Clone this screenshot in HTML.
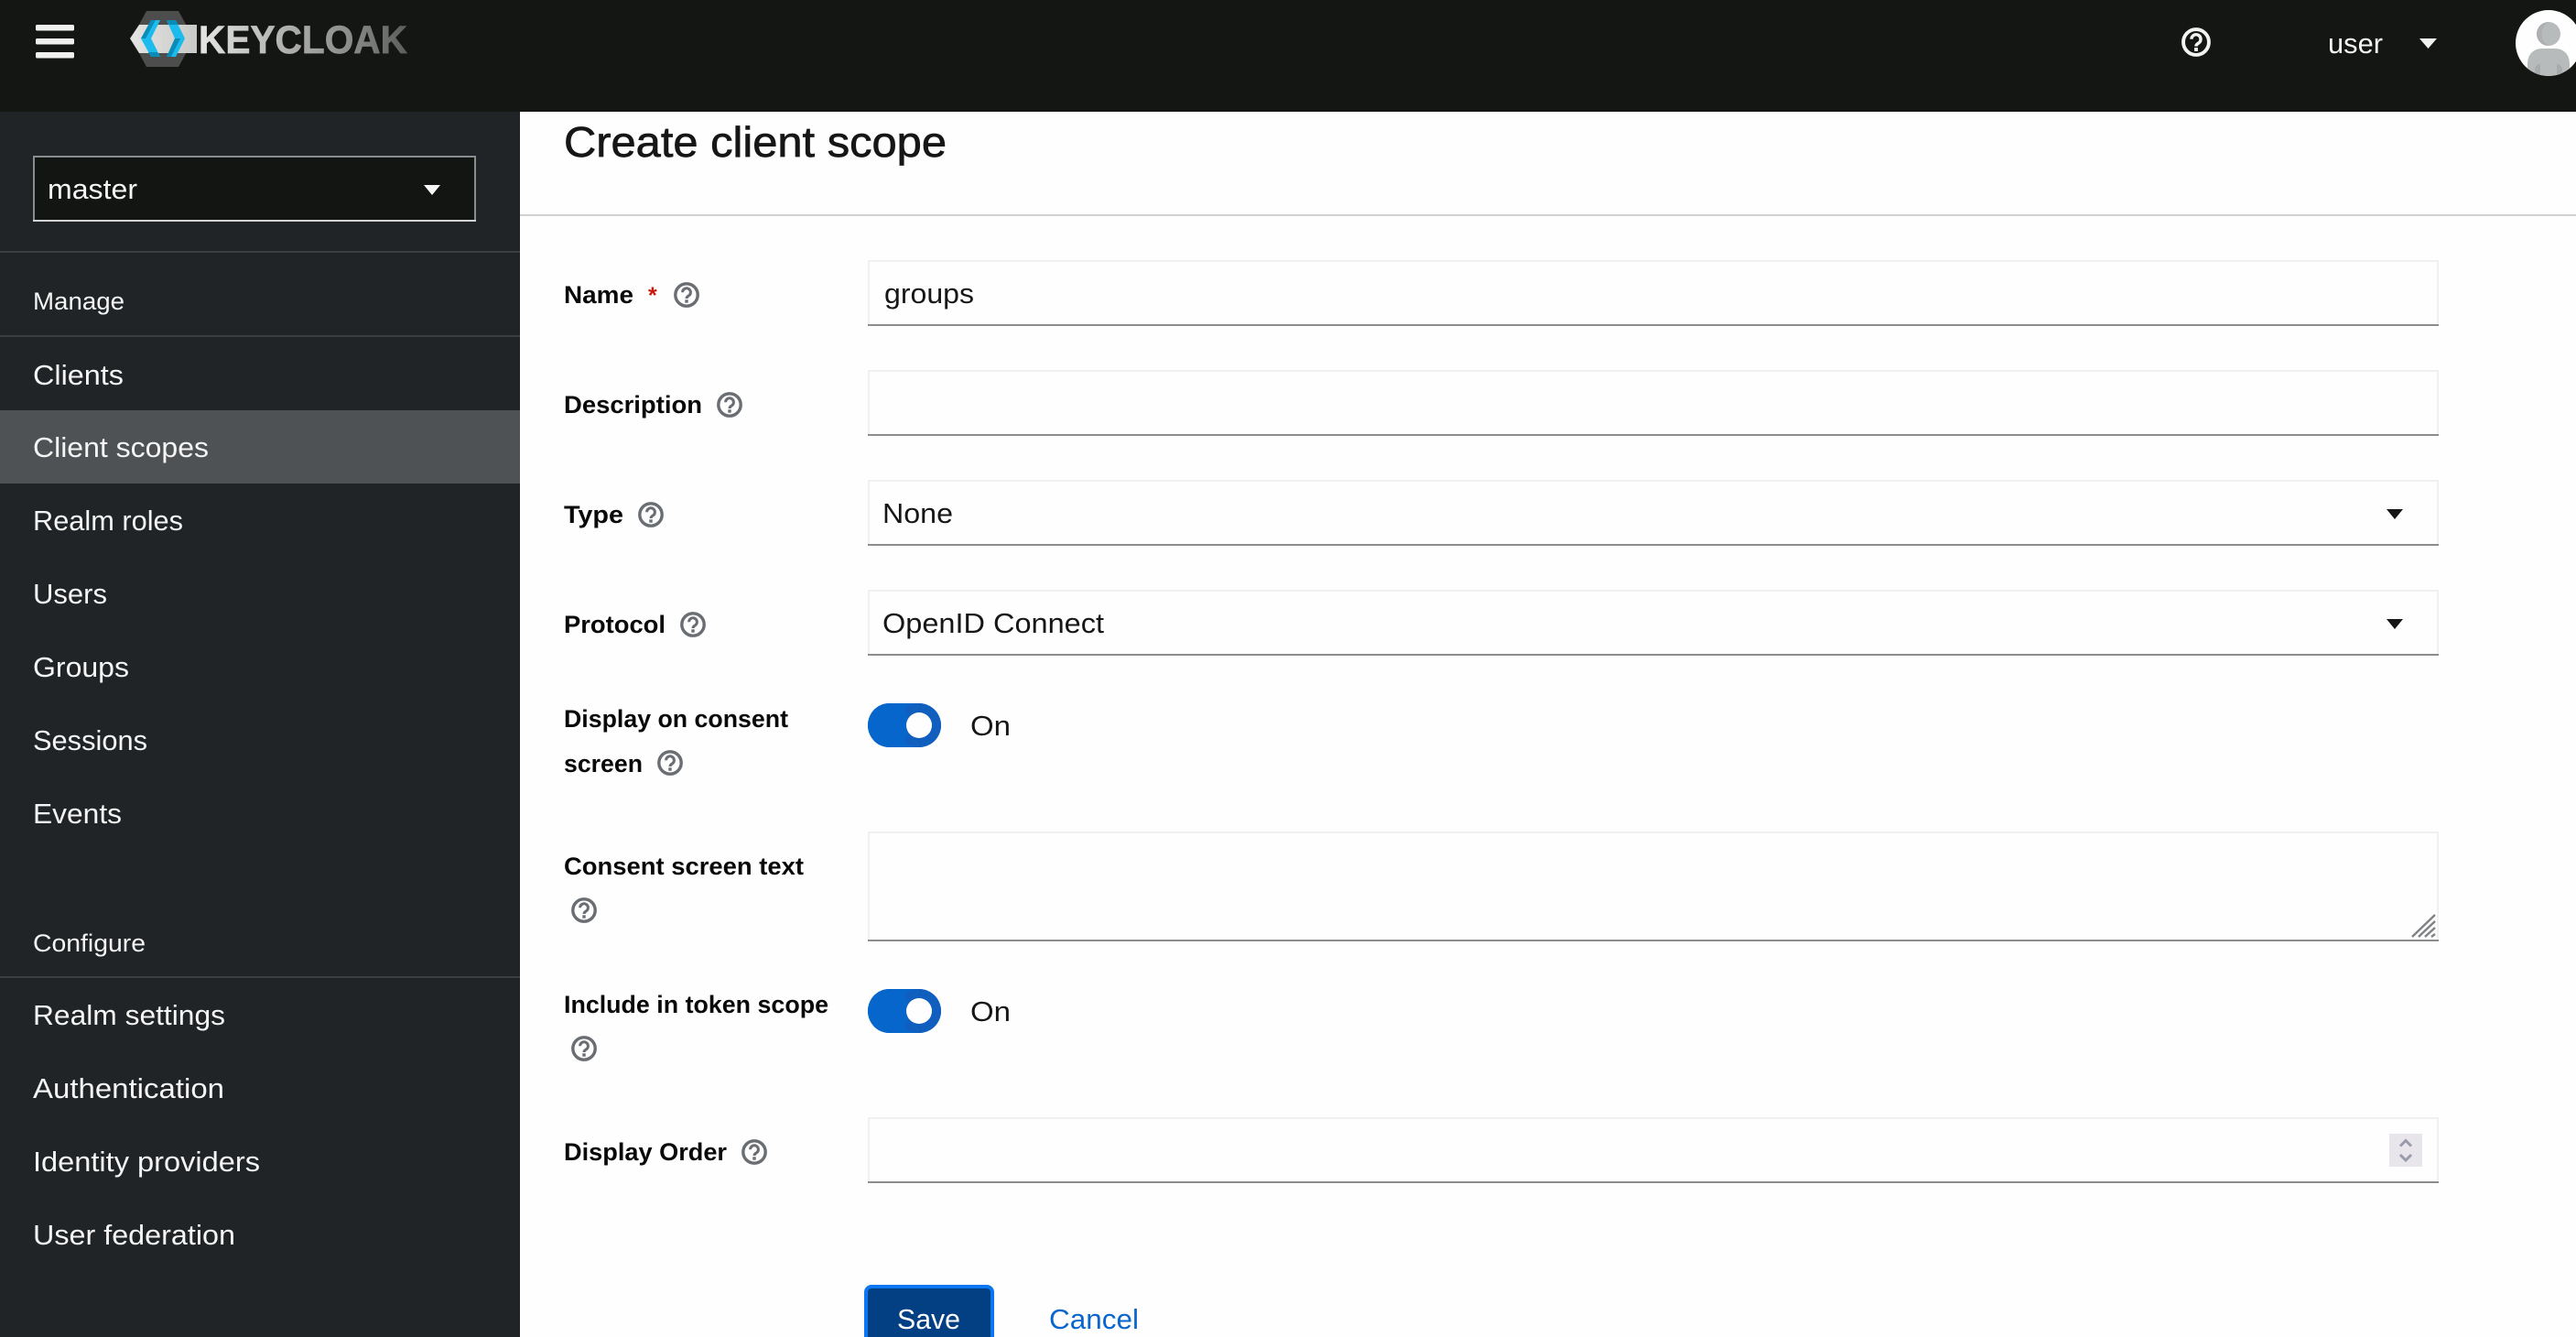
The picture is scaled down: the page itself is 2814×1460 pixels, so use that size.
<!DOCTYPE html>
<html lang="en">
<head>
<meta charset="utf-8">
<title>Create client scope - Keycloak</title>
<style>
html,body{margin:0;padding:0;background:#fdfefd;width:2814px;height:1460px;overflow:hidden}
svg{display:block}
text{font-family:"Liberation Sans",sans-serif;white-space:pre}
.nav{font-size:30.5px;fill:#f4f5f4}
.sec{font-size:26.5px;fill:#f4f5f4}
.lbl{font-size:26.5px;font-weight:700;fill:#080908}
.val{font-size:30.5px;fill:#151615}
.fb{fill:#f0f0f0}
.fl{fill:#8a8c8e}
</style>
</head>
<body>
<svg xmlns="http://www.w3.org/2000/svg" width="2814" height="1460" viewBox="0 0 2814 1460">
<defs>
<linearGradient id="kc" gradientUnits="userSpaceOnUse" x1="217" y1="0" x2="445" y2="0">
<stop offset="0" stop-color="#e6e6e4"/><stop offset="0.35" stop-color="#b8b8b6"/><stop offset="0.72" stop-color="#8c8d8b"/><stop offset="1" stop-color="#5c5d5b"/>
</linearGradient>
<linearGradient id="band" gradientUnits="userSpaceOnUse" x1="142" y1="0" x2="215" y2="0">
<stop offset="0" stop-color="#e4e4e2"/><stop offset="1" stop-color="#c9cac8"/>
</linearGradient>
<symbol id="help" viewBox="0 0 28 28">
<circle cx="14" cy="14" r="12.2" fill="none" stroke="currentColor" stroke-width="3.4"/>
<path d="M9.6 11.2a4.4 4.4 0 1 1 6.9 3.6c-1.5 1-2.5 1.6-2.5 3.2" fill="none" stroke="currentColor" stroke-width="3"/>
<rect x="12.3" y="19.3" width="3.4" height="3.4" fill="currentColor"/>
</symbol>
<clipPath id="av"><circle cx="2784" cy="47" r="36"/></clipPath>
</defs>

<!-- page -->
<rect width="2814" height="1460" fill="#fdfefd"/>

<!-- header -->
<rect width="2814" height="122" fill="#141613"/>
<g fill="#f0f1ee">
<rect x="39" y="27" width="42" height="6.5" rx="1.6"/>
<rect x="39" y="42" width="42" height="6.5" rx="1.6"/>
<rect x="39" y="57" width="42" height="6.5" rx="1.6"/>
</g>

<!-- logo -->
<polygon points="152,27 160,12 195,12 206,32 206,53 195,73 160,73 152,58" fill="#4c4d4c"/>
<polygon points="142,42 152,27 215,27 215,58 152,58" fill="url(#band)"/>
<polygon points="165,22 175,22 165,42 175,62 165,62 154,42" fill="#1cbbed"/>
<polygon points="165,22 170,22 159,42 154,42" fill="#0a8cb8"/>
<polygon points="165,62 175,62 172,57 162,57" fill="#0a8cb8"/>
<polygon points="182,22 192,22 202,42 192,62 182,62 191,42" fill="#1cbbed"/>
<polygon points="182,62 187,62 197,42 191,42" fill="#0a8cb8"/>
<polygon points="182,22 192,22 195,27 185,27" fill="#0a8cb8"/>
<text x="217" y="58" fill="url(#kc)" stroke="url(#kc)" stroke-width="0.7" textLength="228" lengthAdjust="spacingAndGlyphs" style="font-size:43px;font-weight:700">KEYCLOAK</text>

<!-- header right -->
<use href="#help" x="2383" y="30" width="32" height="32" color="#f2f3f0"/>
<text class="nav" x="2543" y="58" textLength="60" lengthAdjust="spacingAndGlyphs">user</text>
<polygon points="2643,42 2662,42 2652.5,53" fill="#f2f3f0"/>
<circle cx="2784" cy="47" r="36" fill="#fdfefd"/>
<g clip-path="url(#av)">
<circle cx="2784" cy="37" r="13" fill="#b8bbbb"/>
<path d="M2784 24a13 13 0 0 0 0 26a15 15 0 0 1 0-26z" fill="#afaeb2"/>
<path d="M2761 84v-14c0-11 7-17 16-17h14c9 0 16 6 16 17v14z" fill="#b8bbbb"/>
<path d="M2769 84v-8c0-4 3-6 6-6v14zM2799 84v-8c0-4-3-6-6-6v14z" fill="#a9abab"/>
</g>

<!-- sidebar -->
<rect y="122" width="568" height="1338" fill="#212427"/>
<rect x="37" y="171" width="482" height="70" fill="#131513" stroke="#8a8d90" stroke-width="2"/>
<rect x="36" y="240" width="484" height="2" fill="#d2d2d2"/>
<text class="nav" x="52" y="217" textLength="98" lengthAdjust="spacingAndGlyphs">master</text>
<polygon points="463,202 481,202 472,213" fill="#f8f8f8"/>
<rect y="274" width="568" height="2" fill="#3c3f42"/>
<text class="sec" x="36" y="338" textLength="100" lengthAdjust="spacingAndGlyphs">Manage</text>
<rect y="366" width="568" height="2" fill="#3c3f42"/>
<rect y="448" width="568" height="80" fill="#4f5255"/>
<text class="nav" x="36" y="420" textLength="99" lengthAdjust="spacingAndGlyphs">Clients</text>
<text class="nav" x="36" y="499" textLength="192" lengthAdjust="spacingAndGlyphs">Client scopes</text>
<text class="nav" x="36" y="579" textLength="164" lengthAdjust="spacingAndGlyphs">Realm roles</text>
<text class="nav" x="36" y="659" textLength="81" lengthAdjust="spacingAndGlyphs">Users</text>
<text class="nav" x="36" y="739" textLength="105" lengthAdjust="spacingAndGlyphs">Groups</text>
<text class="nav" x="36" y="819" textLength="125" lengthAdjust="spacingAndGlyphs">Sessions</text>
<text class="nav" x="36" y="899" textLength="97" lengthAdjust="spacingAndGlyphs">Events</text>
<text class="sec" x="36" y="1039" textLength="123" lengthAdjust="spacingAndGlyphs">Configure</text>
<rect y="1066" width="568" height="2" fill="#3c3f42"/>
<text class="nav" x="36" y="1119" textLength="210" lengthAdjust="spacingAndGlyphs">Realm settings</text>
<text class="nav" x="36" y="1199" textLength="209" lengthAdjust="spacingAndGlyphs">Authentication</text>
<text class="nav" x="36" y="1279" textLength="248" lengthAdjust="spacingAndGlyphs">Identity providers</text>
<text class="nav" x="36" y="1359" textLength="221" lengthAdjust="spacingAndGlyphs">User federation</text>

<!-- title -->
<text x="616" y="171" style="font-size:46px" fill="#151615" stroke="#151615" stroke-width="0.7" textLength="418" lengthAdjust="spacingAndGlyphs">Create client scope</text>
<rect x="568" y="234" width="2246" height="2" fill="#d2d2d2"/>

<!-- Name -->
<text class="lbl" x="616" y="331" textLength="76" lengthAdjust="spacingAndGlyphs">Name</text>
<text x="708" y="331" style="font-size:25px;font-weight:700" fill="#c9190b">*</text>
<use href="#help" x="736" y="308" width="28" height="28" color="#6a6e73"/>
<rect class="fb" x="948" y="284" width="1716" height="72"/>
<rect x="950" y="286" width="1712" height="68" fill="#fdfefd"/>
<rect class="fl" x="948" y="354" width="1716" height="2"/>
<text class="val" x="966" y="331" textLength="98" lengthAdjust="spacingAndGlyphs">groups</text>

<!-- Description -->
<text class="lbl" x="616" y="451" textLength="151" lengthAdjust="spacingAndGlyphs">Description</text>
<use href="#help" x="783" y="428" width="28" height="28" color="#6a6e73"/>
<rect class="fb" x="948" y="404" width="1716" height="72"/>
<rect x="950" y="406" width="1712" height="68" fill="#fdfefd"/>
<rect class="fl" x="948" y="474" width="1716" height="2"/>

<!-- Type -->
<text class="lbl" x="616" y="571" textLength="65" lengthAdjust="spacingAndGlyphs">Type</text>
<use href="#help" x="697" y="548" width="28" height="28" color="#6a6e73"/>
<rect class="fb" x="948" y="524" width="1716" height="72"/>
<rect x="950" y="526" width="1712" height="68" fill="#fdfefd"/>
<rect class="fl" x="948" y="594" width="1716" height="2"/>
<text class="val" x="964" y="571" textLength="77" lengthAdjust="spacingAndGlyphs">None</text>
<polygon points="2607,556 2625,556 2616,567" fill="#151615"/>

<!-- Protocol -->
<text class="lbl" x="616" y="691" textLength="111" lengthAdjust="spacingAndGlyphs">Protocol</text>
<use href="#help" x="743" y="668" width="28" height="28" color="#6a6e73"/>
<rect class="fb" x="948" y="644" width="1716" height="72"/>
<rect x="950" y="646" width="1712" height="68" fill="#fdfefd"/>
<rect class="fl" x="948" y="714" width="1716" height="2"/>
<text class="val" x="964" y="691" textLength="242" lengthAdjust="spacingAndGlyphs">OpenID Connect</text>
<polygon points="2607,676 2625,676 2616,687" fill="#151615"/>

<!-- Display on consent screen -->
<text class="lbl" x="616" y="794" textLength="245" lengthAdjust="spacingAndGlyphs">Display on consent</text>
<text class="lbl" x="616" y="843" textLength="86" lengthAdjust="spacingAndGlyphs">screen</text>
<use href="#help" x="718" y="819" width="28" height="28" color="#6a6e73"/>
<rect x="948" y="768" width="80" height="48" rx="24" fill="#0766cc"/>
<circle cx="1004" cy="792" r="24" fill="#105fbf"/>
<rect x="948" y="768" width="46" height="48" rx="24" fill="#0766cc"/>
<rect x="970" y="768" width="20" height="48" fill="#0766cc"/>
<circle cx="1004" cy="792" r="14" fill="#fdfefd"/>
<text class="val" x="1060" y="803" textLength="44" lengthAdjust="spacingAndGlyphs">On</text>

<!-- Consent screen text -->
<text class="lbl" x="616" y="955" textLength="262" lengthAdjust="spacingAndGlyphs">Consent screen text</text>
<use href="#help" x="624" y="980" width="28" height="28" color="#6a6e73"/>
<rect class="fb" x="948" y="908" width="1716" height="120"/>
<rect x="950" y="910" width="1712" height="116" fill="#fdfefd"/>
<rect class="fl" x="948" y="1026" width="1716" height="2"/>
<g stroke="#808285" stroke-width="2.4" fill="none">
<path d="M2635 1023L2660 999M2642 1023L2660 1006M2649 1023L2660 1013M2656 1023L2660 1020"/>
</g>

<!-- Include in token scope -->
<text class="lbl" x="616" y="1106" textLength="289" lengthAdjust="spacingAndGlyphs">Include in token scope</text>
<use href="#help" x="624" y="1131" width="28" height="28" color="#6a6e73"/>
<rect x="948" y="1080" width="80" height="48" rx="24" fill="#0766cc"/>
<circle cx="1004" cy="1104" r="24" fill="#105fbf"/>
<rect x="948" y="1080" width="46" height="48" rx="24" fill="#0766cc"/>
<rect x="970" y="1080" width="20" height="48" fill="#0766cc"/>
<circle cx="1004" cy="1104" r="14" fill="#fdfefd"/>
<text class="val" x="1060" y="1115" textLength="44" lengthAdjust="spacingAndGlyphs">On</text>

<!-- Display Order -->
<text class="lbl" x="616" y="1267" textLength="178" lengthAdjust="spacingAndGlyphs">Display Order</text>
<use href="#help" x="810" y="1244" width="28" height="28" color="#6a6e73"/>
<rect class="fb" x="948" y="1220" width="1716" height="72"/>
<rect x="950" y="1222" width="1712" height="68" fill="#fdfefd"/>
<rect class="fl" x="948" y="1290" width="1716" height="2"/>
<rect x="2610" y="1238" width="36" height="36" fill="#e8e6eb"/>
<path d="M2622 1251.5L2628 1245.5L2634 1251.5M2622 1261L2628 1267L2634 1261" fill="none" stroke="#9a9aae" stroke-width="3"/>

<!-- buttons -->
<rect x="946" y="1405" width="138" height="70" rx="6" fill="#023f83" stroke="#0a77f2" stroke-width="4"/>
<text x="980" y="1451" style="font-size:30.5px" fill="#fff" textLength="69" lengthAdjust="spacingAndGlyphs">Save</text>
<text x="1146" y="1451" style="font-size:30.5px" fill="#0a66cc" textLength="98" lengthAdjust="spacingAndGlyphs">Cancel</text>
</svg>
</body>
</html>
